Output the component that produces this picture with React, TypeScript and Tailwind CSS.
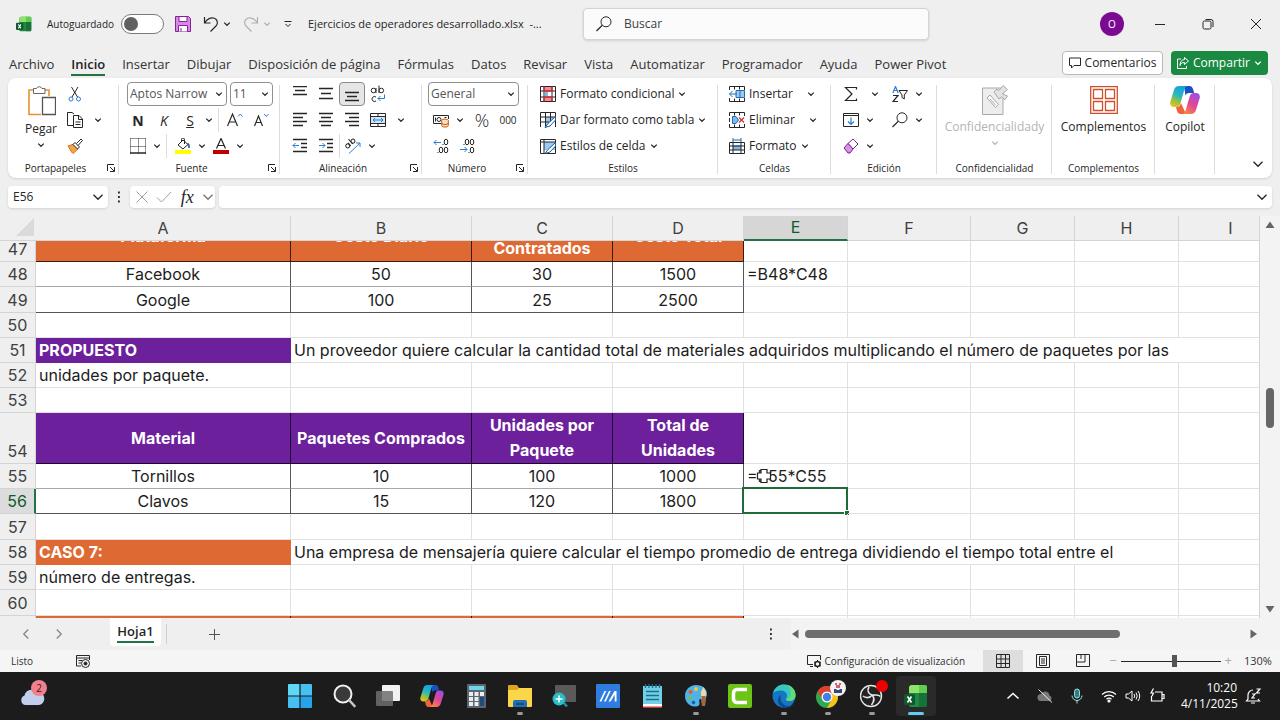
import type { ReactNode } from 'react';
import clsx from 'clsx';

type IconProps = { children: ReactNode; size?: string; box?: string };

const Icon = ({ children, size = 'w-4 h-4', box = '0 0 16 16' }: IconProps) => (
  <svg className={clsx(size, 'shrink-0')} viewBox={box} fill="none" stroke="#262626" strokeWidth="1" aria-hidden="true">
    {children}
  </svg>
);

const Chevron = ({ color = '#262626', big = false }: { color?: string; big?: boolean }) => (
  <svg className={clsx('shrink-0', big ? 'w-3 h-3' : 'w-2 h-2')} viewBox="0 0 8 8" fill="none" stroke={color} strokeWidth={big ? 0.9 : 1.2} aria-hidden="true">
    <path d={big ? 'M1 2.5l3 3 3-3' : 'M1.2 2.6L4 5.3l2.8-2.7'} />
  </svg>
);

/* ---------- Ribbon icons ---------- */

const hLines = (rows: [number, number][], ys: number[]) =>
  rows.map(([a, b], i) => <path key={i} d={`M${a} ${ys[i]}.5H${b}`} strokeWidth="1.3" />);

const AlignTop = () => <Icon>{hLines([[1, 15], [3, 13], [1, 15]], [0, 4, 8])}</Icon>;
const AlignMiddle = () => <Icon>{hLines([[1, 15], [3, 13], [1, 15]], [2, 7, 12])}</Icon>;
const AlignBottom = () => <Icon>{hLines([[1, 15], [3, 13], [1, 15]], [6, 10, 14])}</Icon>;
const AlignLeft = () => <Icon>{hLines([[1, 15], [1, 11], [1, 15], [1, 11]], [1, 5, 9, 13])}</Icon>;
const AlignCenter = () => <Icon>{hLines([[1, 15], [3, 13], [1, 15], [3, 13]], [1, 5, 9, 13])}</Icon>;
const AlignRight = () => <Icon>{hLines([[1, 15], [5, 15], [1, 15], [5, 15]], [1, 5, 9, 13])}</Icon>;

const Indent = ({ right = false }: { right?: boolean }) => (
  <Icon>
    {hLines([[1, 15], [9, 15], [9, 15], [1, 15]], [1, 5, 9, 13])}
    <path stroke="#2b7cd3" d={right ? 'M1 7.5h6M4.500 5l2.500 2.500L4.500 10' : 'M7 7.500H1M3.500 5L1 7.500 3.500 10'} />
  </Icon>
);

const WrapText = () => (
  <Icon size="w-[18px] h-[18px]" box="0 0 18 18">
    <circle cx="4.500" cy="5.500" r="2.300" />
    <path d="M7 3v5M10 0.500V8M7 12a2.500 2.500 0 1 0 0 4" />
    <circle cx="12.300" cy="5.500" r="2.300" />
    <path stroke="#2b7cd3" d="M15.500 9.500v4H9M11.500 11L9 13.500l2.500 2.500" />
  </Icon>
);

const MergeIcon = () => (
  <Icon>
    <path fill="#cfe6fa" stroke="none" d="M1 4h14v8H1z" />
    <path d="M.5 1.500h15v13H.5zM.5 4.500h15M.5 11.500h15M8 1.500v3M8 11.500v3" />
    <path stroke="#2b7cd3" d="M3 8h10M5 6L3 8l2 2M11 6l2 2-2 2" />
  </Icon>
);

const Orientation = () => (
  <Icon size="w-[18px] h-[18px]" box="0 0 18 18">
    <g transform="rotate(-42 7 8)">
      <circle cx="4" cy="6.500" r="2" />
      <path d="M6.200 4.500v4M9 2v6.500" />
      <circle cx="11" cy="6.500" r="2" />
    </g>
    <path stroke="#2b7cd3" d="M5 16.500L16 6M12 6h4v4" />
  </Icon>
);

const PasteIcon = () => (
  <Icon size="w-[29px] h-8" box="0 0 29 32">
    <path stroke="#e8912d" strokeWidth="1.600" d="M14 29.500H2V5h20v6" />
    <path fill="#fff" d="M6.500 8.500v-5H9.500a3 3 0 0 1 5.500 0h3v5z" stroke="#666" />
    <path fill="#fff" d="M15.500 12.500h13v17h-13z" stroke="#555" strokeWidth="1.300" />
  </Icon>
);

const CutIcon = () => (
  <Icon>
    <path d="M4.500 1l6 10M11 1L5 11" />
    <circle cx="4" cy="13" r="2" stroke="#2b7cd3" />
    <circle cx="11.500" cy="13" r="2" stroke="#2b7cd3" />
  </Icon>
);

const CopyIcon = () => (
  <Icon>
    <path d="M6 13.500H.5v-13H5l2 1.500M7.500 4.500V3" />
    <path fill="#fff" d="M6.500 3.500h5.500l3.500 3.500v8.500h-9zM11.500 3.500V7.500h4M8.500 10h5M8.500 12.500h5" />
  </Icon>
);

const BrushIcon = () => (
  <Icon>
    <path fill="#f3a24c" stroke="#d9731a" d="M1 8l6-2 4 5-5 4.500-1.500-1.500z" />
    <path fill="#fff" d="M6 6.500l2-2 4.500 4.500-2 2zM9.500 5.500L14 1l1.500 1.500-4.500 5" />
  </Icon>
);

const BordersIcon = () => (
  <Icon>
    <path strokeDasharray="1 1" d="M.5.5h15M.5.5v15M15.500.5v15M8.500 .5v15M.5 8.500h15" />
    <path strokeWidth="1.300" d="M0 15h16" />
  </Icon>
);

const FillIcon = () => (
  <Icon>
    <path d="M3 7l5-5 5 4.500L8 11z M6.500 3.500V1.500a1.500 1.500 0 0 1 3 0V6" />
    <path stroke="#1f5c99" strokeWidth="1.600" d="M12.500 5.500q2 1 1.500 4.500" />
    <path fill="#ffff00" stroke="none" d="M0 12h16v4H0z" />
  </Icon>
);

const FontColorIcon = () => (
  <Icon>
    <path strokeWidth="1.200" d="M3.500 10.500L8 .5l4.500 10M5 7.500h6" />
    <path fill="#c00000" stroke="none" d="M0 12h16v4H0z" />
  </Icon>
);

const GrowFont = ({ down = false }: { down?: boolean }) => (
  <Icon>
    <path strokeWidth="1.200" d={down ? 'M1.500 14L5.500 4l4 10M3 10.500h5' : 'M.5 14L5.500 2l5 12M2.200 10h6.600'} />
    <path stroke="#2b7cd3" d={down ? 'M11 2l2.300 2.500L15.500 2' : 'M11 4.500L13.300 2l2.200 2.500'} />
  </Icon>
);

const MoneyIcon = () => (
  <Icon>
    <path d="M9 11.500H.5v-8h15V7" />
    <circle cx="6" cy="7.500" r="2" />
    <path d="M2.500 5.500v4M11.500 5.500h2" />
    <g stroke="#c55a11" fill="#fbe0c4">
      <ellipse cx="12" cy="8.500" rx="3.300" ry="1.400" />
      <path d="M8.700 8.500v5c0 2 6.600 2 6.600 0v-5M8.700 11c0 2 6.600 2 6.600 0" />
    </g>
  </Icon>
);

const Decimals = ({ more = false }: { more?: boolean }) => (
  <Icon>
    <ellipse cx="13" cy="4" rx="1.800" ry="2.800" />
    <ellipse cx="13" cy="12" rx="1.800" ry="2.800" />
    {more ? <ellipse cx="8" cy="4" rx="1.800" ry="2.800" /> : <ellipse cx="8" cy="12" rx="1.800" ry="2.800" />}
    <path d={more ? 'M4.500 6.500h1M9.500 14.500h1' : 'M9.500 6.500h1M4.500 14.500h1'} />
    <path stroke="#2b7cd3" d={more ? 'M1 11.500h7M5.500 9L8 11.500 5.500 14' : 'M8 4.500H1M3.500 2L1 4.500 3.500 7'} />
  </Icon>
);

const CondFormat = () => (
  <Icon>
    <path fill="#f28b95" stroke="none" d="M4 1h8v4H4zM4 11h8v4H4z" />
    <path fill="#7db8ee" stroke="none" d="M5 5.500h3v5H5z" />
    <path d="M.5.5h15v15H.5zM.5 5h15M.5 11h15M4 .5v15M12 .5v15" />
    <path stroke="#d13438" strokeWidth="1.300" d="M4 .5v4.500h8V.5M4 15.500V11h8v4.500" />
  </Icon>
);

const TableStyle = ({ cell = false }: { cell?: boolean }) => (
  <Icon>
    <path fill="#9ccaf2" stroke="none" d={cell ? 'M4 4h11v8H4z' : 'M5.500 5h5v5h-5zM10 5h5v5h-5zM5.500 10h5v5h-5z'} />
    <path d={cell ? 'M.5 15.500V1.500h15v14zM.5 4h15M4 1.500v14' : 'M.5 15V.5h15V15M.5 5h15M.5 10h9M5.500.5v15M10.500.5v9'} />
    <path fill="#fff" stroke="#1f5c99" d="M15.500 4.500l-7.500 7-3 4 5-1.500 5.500-6z" />
  </Icon>
);

const InsertCells = () => (
  <Icon>
    <path d="M.5 4V.5h15V4M.5 12v3.500h15V12M5.500.5v3M10.500.5v3M5.500 12.500v3M10.500 12.500v3" />
    <path fill="#9ccaf2" stroke="#1f6fb5" d="M7 4.500h8.500v7H7zM11 4.500v7" />
    <path stroke="#1f6fb5" d="M8 8H.5M3.500 5L.5 8l3 3" />
  </Icon>
);

const DeleteCells = () => (
  <Icon>
    <path d="M.5 4V.5h15V4M.5 12v3.500h15V12M5.500.5v3M10.500.5v3M5.500 12.500v3M10.500 12.500v3M.5 6v4" />
    <path fill="#7db8ee" stroke="#1f6fb5" d="M3.500 4.500h3.500L9.500 8 7 11.500H3.500z" />
    <path stroke="#d13438" strokeWidth="1.300" d="M10 5.500l5 5M15 5.500l-5 5" />
  </Icon>
);

const FormatCells = () => (
  <Icon>
    <path fill="#7db8ee" stroke="none" d="M4 7h8v5H4z" />
    <path d="M.5 4.500h15v11H.5zM.5 8h15M.5 12h15M4 4.500v11M12 4.500v11" />
    <path stroke="#1f6fb5" d="M4 0v4M12 0v4M4 2h8" />
  </Icon>
);

const SigmaIcon = () => (
  <Icon><path strokeWidth="1.200" d="M13.500 3.500V1.500H2.500L9 8l-6.500 6.500h11v-2" /></Icon>
);

const FillDown = () => (
  <Icon>
    <path d="M.5 1.500h15v13H.5zM.5 3.500h15" />
    <path stroke="#2b7cd3" strokeWidth="1.200" d="M8 5.500v7M5 9.500l3 3 3-3" />
  </Icon>
);

const Eraser = () => (
  <Icon>
    <path fill="#fff" stroke="#7a1f8f" d="M5 5.500L10 1l5 5-5 5z" />
    <path fill="#d993e3" stroke="#7a1f8f" d="M1 10l4-4.500 5 5.500-3 4H5z" />
  </Icon>
);

const SortFilter = () => (
  <Icon>
    <path stroke="#2b7cd3" strokeWidth="1.200" d="M.8 7L3.500.5 6.200 7M1.800 4.500h3.500" />
    <path strokeWidth="1.200" d="M1 9.500h5L1 15.500h5" />
    <path d="M7 4.500h8.500l-3.200 4.500v4L10 11.500V9z" />
  </Icon>
);

const FindIcon = () => (
  <Icon>
    <circle cx="10" cy="5.800" r="5" />
    <path d="M6.300 9.300L.5 15" strokeWidth="1.200" />
  </Icon>
);

const Sensitivity = () => (
  <Icon size="w-7 h-[30px]" box="0 0 28 30">
    <g stroke="#a8a8a8" fill="#ededed">
      <path d="M1.500 3H22v26.500H1.500z" />
      <path fill="#fafafa" d="M6 13l3-3 8.500 9.500-3 3z" />
      <path d="M9 14l5.500 6" />
      <path fill="#e3e3e3" d="M13 7l3-3 2 1.500 4-5 4.500 4-5 4.500 5 2-2.500 3.500-3.500-2.500-2.500 2z" />
    </g>
  </Icon>
);

const AddIns = () => (
  <Icon size="w-7 h-7" box="0 0 28 28">
    <g stroke="#d1502b" strokeWidth="1.300">
      <path d="M.7.700h26.600v26.600H.7zM3.500 3.500h9v9h-9zM15.500 3.500h9v9h-9zM3.500 15.500h9v9h-9zM15.500 15.500h9v9h-9z" />
    </g>
  </Icon>
);

const CopilotLogo = ({ size = 'w-[30px] h-7', id }: { size?: string; id: string }) => (
  <svg className={clsx(size, 'shrink-0')} viewBox="0 0 30 28" aria-hidden="true">
    <defs>
      <linearGradient id={`${id}a`} x1="0.600" y1="0" x2="0.200" y2="1">
        <stop offset="0" stopColor="#1aa0e0" />
        <stop offset=".4" stopColor="#25b5c4" />
        <stop offset=".7" stopColor="#8bc34a" />
        <stop offset="1" stopColor="#f4c20d" />
      </linearGradient>
      <linearGradient id={`${id}b`} x1="0.800" y1="0" x2="0.200" y2="1">
        <stop offset="0" stopColor="#9b4fe0" />
        <stop offset=".5" stopColor="#e0459b" />
        <stop offset="1" stopColor="#f98a3c" />
      </linearGradient>
    </defs>
    <path fill="#1b4fc4" d="M14 0h5.500c2 0 3 1.500 3.500 3l1.200 4H19c-2 0-3 1-3.500 2.500z" />
    <path fill={`url(#${id}a)`} d="M9 0h9c-2 0-3 1.500-3.600 3.500L10.500 17c-.7 2.500-2 4-4.500 4H4c-3 0-4.500-2.500-3.600-5.500L4 4C4.800 1.500 6.500 0 9 0z" />
    <path fill="#f0643c" d="M16 28h-5.500c-2 0-3-1.500-3.500-3l-1-4c3 0 4-1 5-4z" />
    <path fill={`url(#${id}b)`} d="M21 28h-9c2 0 3-1.500 3.600-3.500L19.500 11c.7-2.500 2-4 4.500-4h2c3 0 4.500 2.500 3.600 5.500L26 24c-.8 2.500-2.500 4-5 4z" />
  </svg>
);

const ExcelLogo = ({ size }: { size: string }) => (
  <svg className={clsx(size, 'shrink-0')} viewBox="0 0 24 24" aria-hidden="true">
    <path fill="#1d8a45" d="M5 4a3 3 0 0 1 3-3h13a2 2 0 0 1 2 2v18a2 2 0 0 1-2 2H7a2 2 0 0 1-2-2z" />
    <path fill="#8fe36b" d="M5 4a3 3 0 0 1 3-3h7v8H5z" />
    <path fill="#5fce4f" d="M15 1h6a2 2 0 0 1 2 2v6h-8z" />
    <path fill="#145c2e" d="M15 9h8v12a2 2 0 0 1-2 2h-6z" opacity=".55" />
    <rect x="0" y="10" width="11" height="11" rx="1.500" fill="#0f5a2c" />
    <path d="M3.500 12.500l4 6M7.500 12.500l-4 6" stroke="#fff" strokeWidth="1.600" />
  </svg>
);

/* ---------- Ribbon building blocks ---------- */

const Tool = ({ label, children, active = false }: { label: string; children: ReactNode; active?: boolean }) => (
  <button
    type="button"
    aria-label={label}
    className={clsx(
      'flex h-6 w-[26px] shrink-0 items-center justify-center rounded',
      active && 'border border-[#8a8a8a] bg-[#e6e6e6]'
    )}
  >
    {children}
  </button>
);

const More = ({ label }: { label: string }) => (
  <button type="button" aria-label={label} className="flex h-6 w-3 shrink-0 items-center justify-center">
    <Chevron />
  </button>
);

const Sep = () => <span className="mx-[3px] h-6 w-px shrink-0 bg-[#dcdcdc]" />;

const Row = ({ children }: { children: ReactNode }) => <div className="flex h-[26px] items-center">{children}</div>;

type GroupProps = { title?: string; width: string; launcher?: boolean; children: ReactNode };

const Group = ({ title, width, launcher, children }: GroupProps) => (
  <section className={clsx('relative flex shrink-0 flex-col', width)}>
    <div className="h-[78px]">{children}</div>
    {title && (
      <div className={clsx('text-center text-[10px] leading-[18px] text-[#262626]', launcher && 'pr-4')}>{title}</div>
    )}
    {launcher && (
      <button type="button" aria-label={`Opciones de ${title}`} className="absolute right-1 bottom-1.5">
        <Icon size="w-2 h-2" box="0 0 8 8">
          <path d="M.5 7V.5H7M3 3l4 4M7.500 3v4.500H3" />
        </Icon>
      </button>
    )}
    <span className="absolute top-1 right-0 bottom-1 w-px bg-[#dcdcdc]" />
  </section>
);

const RibbonSelect = ({ label, value, width }: { label: string; value: string; width: string }) => (
  <div className={clsx('relative', width)}>
    <select
      aria-label={label}
      defaultValue={value}
      className="h-6 w-full appearance-none rounded border border-[#8f8f8f] bg-white pl-0.5 text-[12px] text-[#555]"
    >
      <option>{value}</option>
    </select>
    <span className="pointer-events-none absolute top-2 right-1 flex">
      <Chevron />
    </span>
  </div>
);

const TextTool = ({ icon, children }: { icon: ReactNode; children: ReactNode }) => (
  <button type="button" className="flex h-[26px] items-center gap-1 whitespace-nowrap">
    {icon}
    <span>{children}</span>
    <Chevron />
  </button>
);

const Ribbon = () => (
  <div className="mx-2 flex h-[100px] shrink-0 overflow-hidden rounded-lg bg-white pt-[3px] text-[12px] text-[#262626] shadow-sm">
    <Group title="Portapapeles" width="w-[111px]" launcher>
      <div className="flex h-full pl-4">
        <button type="button" className="flex w-[34px] flex-col items-center pt-1">
          <PasteIcon />
          <span className="leading-6">Pegar</span>
          <Chevron />
        </button>
        <div className="pl-1">
          <Row><Tool label="Cortar"><CutIcon /></Tool></Row>
          <Row><Tool label="Copiar"><CopyIcon /></Tool><span className="w-1" /><More label="Opciones de copia" /></Row>
          <Row><Tool label="Copiar formato"><BrushIcon /></Tool></Row>
        </div>
      </div>
    </Group>

    <Group title="Fuente" width="w-[161px]" launcher>
      <div className="pl-[6px]">
        <div className="flex h-[26px] items-center gap-[3px] pl-0.5">
          <RibbonSelect label="Fuente" value="Aptos Narrow" width="w-[100px]" />
          <RibbonSelect label="Tamaño de fuente" value="11" width="w-[43px]" />
        </div>
        <Row>
          <Tool label="Negrita"><b className="text-[14px]">N</b></Tool>
          <Tool label="Cursiva"><i className="text-[14px]">K</i></Tool>
          <Tool label="Subrayado"><u className="text-[14px]">S</u></Tool>
          <More label="Opciones de subrayado" />
          <Sep />
          <Tool label="Aumentar tamaño"><GrowFont /></Tool>
          <Tool label="Disminuir tamaño"><GrowFont down /></Tool>
        </Row>
        <Row>
          <Tool label="Bordes"><BordersIcon /></Tool>
          <More label="Opciones de bordes" />
          <Sep />
          <Tool label="Color de relleno"><FillIcon /></Tool>
          <More label="Opciones de relleno" />
          <Tool label="Color de fuente"><FontColorIcon /></Tool>
          <More label="Opciones de color" />
        </Row>
      </div>
    </Group>

    <Group title="Alineación" width="w-[142px]" launcher>
      <div className="pl-[7px]">
        <Row>
          <Tool label="Alinear arriba"><AlignTop /></Tool>
          <Tool label="Alinear en medio"><AlignMiddle /></Tool>
          <Tool label="Alinear abajo" active><AlignBottom /></Tool>
          <Tool label="Ajustar texto"><WrapText /></Tool>
        </Row>
        <Row>
          <Tool label="Izquierda"><AlignLeft /></Tool>
          <Tool label="Centrar"><AlignCenter /></Tool>
          <Tool label="Derecha"><AlignRight /></Tool>
          <Tool label="Combinar y centrar"><MergeIcon /></Tool>
          <span className="w-1" />
          <More label="Opciones de combinar" />
        </Row>
        <Row>
          <Tool label="Disminuir sangría"><Indent /></Tool>
          <Tool label="Aumentar sangría"><Indent right /></Tool>
          <span className="h-6 w-px bg-[#dcdcdc]" />
          <Tool label="Orientación"><Orientation /></Tool>
          <More label="Opciones de orientación" />
        </Row>
      </div>
    </Group>

    <Group title="Número" width="w-[106px]" launcher>
      <div className="pl-[6px]">
        <div className="flex h-[26px] items-center">
          <RibbonSelect label="Formato de número" value="General" width="w-[91px]" />
        </div>
        <Row>
          <Tool label="Formato de contabilidad"><MoneyIcon /></Tool>
          <More label="Opciones de contabilidad" />
          <span className="w-[3px]" />
          <Tool label="Porcentaje"><span className="text-[18px] font-light">%</span></Tool>
          <Tool label="Millares"><span className="text-[10px]">000</span></Tool>
        </Row>
        <Row>
          <Tool label="Aumentar decimales"><Decimals /></Tool>
          <Tool label="Disminuir decimales"><Decimals more /></Tool>
        </Row>
      </div>
    </Group>

    <Group title="Estilos" width="w-[190px]">
      <div className="pl-3">
        <TextTool icon={<CondFormat />}>Formato condicional</TextTool>
        <TextTool icon={<TableStyle />}>Dar formato como tabla</TextTool>
        <TextTool icon={<TableStyle cell />}>Estilos de celda</TextTool>
      </div>
    </Group>

    <Group title="Celdas" width="w-[113px]">
      <div className="pl-[11px]">
        <div className="flex items-center gap-3"><button type="button" className="flex h-[26px] items-center gap-1"><InsertCells />Insertar</button><More label="Opciones de insertar" /></div>
        <div className="flex items-center gap-3"><button type="button" className="flex h-[26px] items-center gap-1"><DeleteCells />Eliminar</button><More label="Opciones de eliminar" /></div>
        <TextTool icon={<FormatCells />}>Formato</TextTool>
      </div>
    </Group>

    <Group title="Edición" width="w-[106px]">
      <div className="pl-[7px]">
        <Row>
          <Tool label="Autosuma"><SigmaIcon /></Tool><span className="w-[5px]" /><More label="Opciones de autosuma" />
          <span className="w-[6px]" />
          <Tool label="Ordenar y filtrar"><SortFilter /></Tool><More label="Opciones de filtro" />
        </Row>
        <Row>
          <Tool label="Rellenar"><FillDown /></Tool><More label="Opciones de rellenar" />
          <span className="w-[11px]" />
          <Tool label="Buscar y seleccionar"><FindIcon /></Tool><More label="Opciones de buscar" />
        </Row>
        <Row>
          <Tool label="Borrar"><Eraser /></Tool><More label="Opciones de borrar" />
        </Row>
      </div>
    </Group>

    <Group title="Confidencialidad" width="w-[115px]">
      <button type="button" disabled className="flex w-full flex-col items-center pt-1 text-[#b4b4b4]">
        <Sensitivity />
        <span className="leading-6">Confidencialidady</span>
        <Chevron color="#b4b4b4" />
      </button>
    </Group>

    <Group title="Complementos" width="w-[103px]">
      <button type="button" className="flex w-full flex-col items-center gap-px pt-[5px]">
        <AddIns />
        <span className="leading-6">Complementos</span>
      </button>
    </Group>

    <Group width="w-[60px]">
      <button type="button" className="flex w-full flex-col items-center gap-px pt-[5px]">
        <CopilotLogo id="ribbon" />
        <span className="leading-6">Copilot</span>
      </button>
    </Group>

    <button type="button" aria-label="Contraer la cinta" className="mt-auto mr-2 mb-2 ml-auto">
      <Chevron big />
    </button>
  </div>
);

/* ---------- Window chrome ---------- */

const TitleBar = () => (
  <header className="flex h-12 shrink-0 items-center pr-[18px] pl-4 text-[12px] text-[#262626]">
    <ExcelLogo size="w-4 h-4" />
    <label htmlFor="autosave" className="ml-[15px] w-[74px] text-[10px]">Autoguardado</label>
    <span className="relative flex h-5 w-[43px] items-center">
      <input id="autosave" type="checkbox" role="switch" className="h-5 w-full appearance-none rounded-full border border-[#7a7a7a] bg-white" />
      <span className="pointer-events-none absolute left-[3px] h-3.5 w-3.5 rounded-full bg-[#616161]" />
    </span>
    <button type="button" aria-label="Guardar" className="ml-[11px]">
      <Icon>
        <path fill="#d58be0" stroke="#8a1f9e" d="M.5.5h13l2 2v13H.5z" />
        <path fill="#fff" stroke="#8a1f9e" d="M4 .5h8v5H4zM3.500 15.500v-6h9v6M6 15.500v-3.500" />
      </Icon>
    </button>
    <button type="button" aria-label="Deshacer" className="ml-3 flex items-center gap-1">
      <Icon><path strokeWidth="1.200" d="M1.500 1v6h6M1.800 6.700C4 3.500 7 1.500 10.500 2c4 .6 5 5.500 2.500 8L7.500 15.500" /></Icon>
      <Chevron />
    </button>
    <button type="button" aria-label="Rehacer" disabled className="ml-3 flex items-center gap-1">
      <Icon><path stroke="#b0b0b0" strokeWidth="1.200" d="M14.500 1v6h-6M14.200 6.700C12 3.500 9 1.500 5.500 2c-4 .6-5 5.500-2.500 8l5.500 5.500" /></Icon>
      <Chevron color="#b0b0b0" />
    </button>
    <button type="button" aria-label="Personalizar" className="ml-[13px]">
      <Icon size="w-2 h-2" box="0 0 8 8"><path d="M.5 1.500h7M1.500 4L4 6.500 6.500 4" /></Icon>
    </button>
    <h1 className="ml-4 w-[254px] text-[11px] whitespace-pre">Ejercicios de operadores desarrollado.xlsx  -...</h1>
    <label className="ml-[21px] flex h-8 w-[346px] items-center gap-3 rounded border border-[#d4d4d4] bg-[#fbfbfb] px-3 shadow-sm">
      <FindIcon />
      <input aria-label="Buscar" placeholder="Buscar" className="w-full bg-transparent text-[12px] outline-none placeholder:text-[#404040]" />
    </label>
    <div className="ml-auto flex items-center gap-[30px]">
      <span className="flex h-6 w-6 items-center justify-center rounded-full bg-[#7b0a92] text-[10px] text-white">O</span>
      <div className="flex items-center gap-9">
        <button type="button" aria-label="Minimizar"><Icon size="w-3 h-3" box="0 0 12 12"><path d="M1 6.500h10" /></Icon></button>
        <button type="button" aria-label="Restaurar">
          <Icon size="w-3 h-3" box="0 0 12 12">
            <rect x="1" y="3" width="8" height="8" rx="1.500" />
            <path d="M3.500 1.500H9a2 2 0 0 1 2 2V9" />
          </Icon>
        </button>
        <button type="button" aria-label="Cerrar"><Icon size="w-3 h-3" box="0 0 12 12"><path d="M1 1l10 10M11 1L1 11" /></Icon></button>
      </div>
    </div>
  </header>
);

const menu = [
  'Archivo', 'Inicio', 'Insertar', 'Dibujar', 'Disposición de página', 'Fórmulas', 'Datos',
  'Revisar', 'Vista', 'Automatizar', 'Programador', 'Ayuda', 'Power Pivot',
];

const MenuBar = () => (
  <nav className="flex h-[30px] shrink-0 items-center gap-[17px] pr-3 pl-[9px] text-[13px] text-[#333]">
    {menu.map((name) => (
      <a
        key={name}
        href="#"
        className={clsx(
          'border-b-2 pt-1 leading-5 whitespace-nowrap',
          name === 'Inicio' ? 'border-[#217346] font-semibold text-[#1f1f1f]' : 'border-transparent'
        )}
      >
        {name}
      </a>
    ))}
    <div className="ml-auto flex gap-2">
      <button type="button" className="flex h-6 w-[101px] items-center justify-center gap-1 rounded border border-[#b8b8b8] bg-white text-[12px] text-[#262626]">
        <Icon size="w-3 h-3" box="0 0 12 12"><path d="M.5 1h11v7.500H5L2.500 11V8.500h-2z" /></Icon>
        Comentarios
      </button>
      <button type="button" className="flex h-6 w-[97px] items-center justify-center gap-1 rounded bg-[#1a8a43] text-[12px] text-white">
        <Icon size="w-3 h-3" box="0 0 12 12"><path stroke="#fff" d="M4 2H.5v9.500h9V9M7.500.5L11.500 4l-4 3.500V5.500C5 5.500 3.500 6.500 3 8.500 3 5 4.500 2.800 7.500 2.500z" /></Icon>
        Compartir
        <Chevron color="#fff" />
      </button>
    </div>
  </nav>
);

const FormulaBar = () => (
  <div className="flex h-[38px] shrink-0 items-center px-2 text-[12px] text-[#262626]">
    <label className="flex h-[22px] w-[100px] items-center justify-between rounded bg-white pr-1 pl-[5px] shadow-sm">
      <input aria-label="Cuadro de nombres" defaultValue="E56" className="w-16 outline-none" />
      <Chevron big />
    </label>
    <Icon size="w-4 h-4 mx-[3px]"><path strokeWidth="1.800" d="M7 3.500h1.800M7 8h1.800M7 12.500h1.800" /></Icon>
    <div className="flex h-[22px] w-[85px] items-center justify-between rounded bg-white pr-px pl-[6px] shadow-sm">
      <button type="button" aria-label="Cancelar"><Icon size="w-3 h-3" box="0 0 12 12"><path stroke="#a0a0a0" d="M.5.5l11 11M11.500.5l-11 11" /></Icon></button>
      <button type="button" aria-label="Introducir"><Icon size="w-4 h-3" box="0 0 16 12"><path stroke="#a0a0a0" d="M1 6.500L5.500 11 15 1" /></Icon></button>
      <button type="button" aria-label="Insertar función" className="font-['Liberation_Serif',serif] text-[18px] leading-5 italic">fx</button>
      <Chevron big color="#777" />
    </div>
    <label className="ml-1 flex h-[22px] flex-1 items-center rounded bg-white pr-1 shadow-sm">
      <input aria-label="Barra de fórmulas" className="w-full outline-none" />
      <Chevron big />
    </label>
  </div>
);

/* ---------- Sheet ---------- */

const columns = [
  { name: 'A', width: 'w-[255px]' },
  { name: 'B', width: 'w-[181px]' },
  { name: 'C', width: 'w-[141px]' },
  { name: 'D', width: 'w-[131px]' },
  { name: 'E', width: 'w-[104px]' },
  { name: 'F', width: 'w-[123px]' },
  { name: 'G', width: 'w-[104px]' },
  { name: 'H', width: 'w-[104px]' },
  { name: 'I', width: 'w-[104px]' },
];

type Kind = 'orange' | 'purple' | 'data' | 'plain' | 'caseOrange' | 'casePurple';
type SheetRow = { n?: number; height: string; kind: Kind; cells?: string[]; formula?: string; note?: string; span?: number };

const rows: SheetRow[] = [
  { n: 47, height: 'h-[51px]', kind: 'orange', cells: ['Plataforma', 'Costo Diario', '\nContratados', 'Costo Total'] },
  { n: 48, height: 'h-[25px]', kind: 'data', cells: ['Facebook', '50', '30', '1500'], formula: '=B48*C48' },
  { n: 49, height: 'h-[26px]', kind: 'data', cells: ['Google', '100', '25', '2500'] },
  { n: 50, height: 'h-[25px]', kind: 'plain' },
  {
    n: 51, height: 'h-[25px]', kind: 'casePurple', cells: ['PROPUESTO'], span: 8,
    note: 'Un proveedor quiere calcular la cantidad total de materiales adquiridos multiplicando el número de paquetes por las',
  },
  { n: 52, height: 'h-[25px]', kind: 'plain', cells: ['unidades por paquete.'] },
  { n: 53, height: 'h-[25px]', kind: 'plain' },
  { n: 54, height: 'h-[51px]', kind: 'purple', cells: ['Material', 'Paquetes Comprados', 'Unidades por\nPaquete', 'Total de\nUnidades'] },
  { n: 55, height: 'h-[25px]', kind: 'data', cells: ['Tornillos', '10', '100', '1000'], formula: '=B55*C55' },
  { n: 56, height: 'h-[25px]', kind: 'data', cells: ['Clavos', '15', '120', '1800'] },
  { n: 57, height: 'h-[26px]', kind: 'plain' },
  {
    n: 58, height: 'h-[25px]', kind: 'caseOrange', cells: ['CASO 7:'], span: 7,
    note: 'Una empresa de mensajería quiere calcular el tiempo promedio de entrega dividiendo el tiempo total entre el',
  },
  { n: 59, height: 'h-[25px]', kind: 'plain', cells: ['número de entregas.'] },
  { n: 60, height: 'h-[26px]', kind: 'plain' },
  { height: 'h-[51px]', kind: 'orange', cells: ['', '', '', ''] },
];

const cellStyle: Record<Kind, string> = {
  orange: 'border-[#3a1a08] bg-[#df6932] px-1 text-center leading-[25px] font-bold whitespace-pre-line text-white',
  purple: 'border-[#1d0730] bg-[#6c209c] px-1 text-center leading-[25px] font-bold whitespace-pre-line text-white',
  data: 'border-[#555] text-center leading-6',
  plain: 'border-[#e1e1e1] pl-[3px] leading-6 whitespace-nowrap',
  caseOrange: 'border-[#df6932] bg-[#df6932] pl-[3px] leading-6 font-bold text-white',
  casePurple: 'border-[#6c209c] bg-[#6c209c] pl-[3px] leading-6 font-bold text-white',
};

const SheetCols = () => (
  <colgroup>
    <col className="w-9" />
    {columns.map((c) => <col key={c.name} className={c.width} />)}
  </colgroup>
);

const SheetRowView = ({ row }: { row: SheetRow }) => {
  const used = row.cells?.length ?? 0;
  const restStart = used + (row.span ?? 0);
  return (
    <tr className={row.height}>
      <th
        scope="row"
        className={clsx(
          'border-r border-b border-[#d4d4d4] p-0 align-bottom leading-6 font-normal',
          row.n === 56 ? 'border-r-2 border-r-[#217346] bg-[#dcdcdc] text-[#0f5a2c]' : 'bg-[#efefef] text-[#404040]'
        )}
      >
        {row.n}
      </th>
      {row.cells?.map((text, i) => (
        <td key={i} className={clsx('border-r border-b py-0', cellStyle[row.kind], row.formula && 'border-b-[#a8a8a8]')}>
          {text}
        </td>
      ))}
      {row.note && (
        <td colSpan={row.span} className="border-r border-b border-[#e1e1e1] p-0 pl-[3px] leading-6 whitespace-nowrap">{row.note}</td>
      )}
      {columns.slice(restStart).map((c) => (
        <td key={c.name} className="relative border-r border-b border-[#e1e1e1] p-0 pl-[3px] leading-6 whitespace-nowrap">
          {c.name === 'E' && row.formula}
          {c.name === 'E' && row.n === 55 && (
            <svg className="absolute top-1 left-3 h-4 w-4" viewBox="0 0 16 16" fill="#fff" stroke="#222" strokeWidth="1.200" aria-hidden="true">
              <path d="M5 1.500h6V5h3.500v6H11v3.500H5V11H1.500V5H5z" />
            </svg>
          )}
          {c.name === 'E' && row.n === 56 && (
            <span className="absolute -top-0.5 -right-px -bottom-px -left-0.5 border-2 border-[#1f6b3a]">
              <span className="absolute -right-[3px] -bottom-[3px] h-[5px] w-[5px] border-t border-l border-white bg-[#1f6b3a]" />
            </span>
          )}
        </td>
      ))}
    </tr>
  );
};

const Sheet = () => (
  <main className="flex min-h-0 flex-1 bg-[#efefef]">
    <div className="flex min-w-0 flex-1 flex-col overflow-hidden border-r border-[#d4d4d4] bg-white font-['Inter',sans-serif] text-[16px] text-[#1c1c1c]">
      <table className="w-[1283px] shrink-0 table-fixed border-separate border-spacing-0">
        <SheetCols />
        <thead>
          <tr className="h-[25px]">
            <th className="relative border-b border-[#d4d4d4] bg-[#efefef] p-0">
              <svg className="absolute right-0.5 bottom-1 h-[18px] w-[18px]" viewBox="0 0 18 18" aria-hidden="true"><path fill="#dadada" d="M18 0v18H0z" /></svg>
            </th>
            {columns.map((c) => (
              <th
                key={c.name}
                scope="col"
                className={clsx(
                  'border-r p-0 leading-[23px] font-normal',
                  c.name === 'E' ? 'border-b-2 border-r-[#d4d4d4] border-b-[#217346] bg-[#d6d6d6] text-[#0f5a2c]' : 'border-b border-[#d4d4d4] bg-[#efefef] text-[#404040]'
                )}
              >
                {c.name}
              </th>
            ))}
          </tr>
        </thead>
      </table>
      <div className="min-h-0 flex-1 overflow-hidden">
        <table className="-mt-[30px] w-[1283px] table-fixed border-separate border-spacing-0">
          <SheetCols />
          <tbody>
            {rows.map((row, i) => <SheetRowView key={i} row={row} />)}
          </tbody>
        </table>
      </div>
    </div>
    <div className="flex w-5 flex-col items-center bg-[#f3f3f3] py-1">
      <button type="button" aria-label="Subir"><Icon size="w-2.5 h-2.5" box="0 0 10 10"><path fill="#666" stroke="none" d="M5 1.500L9.500 8h-9z" /></Icon></button>
      <span className="mt-[158px] h-10 w-2 rounded-full bg-[#666]" />
      <button type="button" aria-label="Bajar" className="mt-auto"><Icon size="w-2.5 h-2.5" box="0 0 10 10"><path fill="#666" stroke="none" d="M5 8.500L9.500 2h-9z" /></Icon></button>
    </div>
  </main>
);

const SheetTabs = () => (
  <div className="flex h-8 shrink-0 items-center bg-[#efefef]">
    <button type="button" aria-label="Hoja anterior" className="ml-5 flex h-3 w-3 rotate-90"><Chevron big color="#888" /></button>
    <button type="button" aria-label="Hoja siguiente" className="ml-[21px] flex h-3 w-3 -rotate-90"><Chevron big color="#888" /></button>
    <button type="button" className="mb-1 ml-[45px] flex h-7 w-[51px] items-center justify-center rounded-b bg-white text-[13px] font-semibold text-[#262626]">
      <span className="border-b-2 border-[#217346] leading-5">Hoja1</span>
    </button>
    <span className="ml-[5px] h-5 w-px bg-[#d0d0d0]" />
    <button type="button" aria-label="Hoja nueva" className="ml-[39px]"><Icon><path stroke="#555" d="M8.500 3v11M3 8.500h11" /></Icon></button>
    <div className="ml-auto flex h-full w-[517px] items-center">
      <Icon><path strokeWidth="1.800" d="M7 3.500h1.800M7 8h1.800M7 12.500h1.800" /></Icon>
      <div className="ml-3 flex h-full flex-1 items-center bg-[#f3f3f3] pr-[22px]">
        <Icon size="w-2.5 h-2.5" box="0 0 10 10"><path fill="#666" stroke="none" d="M1 5l6.500-4.500v9z" /></Icon>
        <span className="ml-1 h-2 w-[315px] rounded-full bg-[#6e6e6e]" />
        <span className="ml-auto"><Icon size="w-2.5 h-2.5" box="0 0 10 10"><path fill="#666" stroke="none" d="M9 5L2.500.5v9z" /></Icon></span>
      </div>
    </div>
  </div>
);

const StatusBar = () => (
  <footer className="flex h-[22px] shrink-0 items-center bg-[#f5f5f5] pr-2 pl-[11px] text-[10px] text-[#333]">
    <span className="w-16">Listo</span>
    <Icon>
      <path d="M6 13H1.500V2.500h13V7M1.500 5h13M3.500 7.500H7M3.500 10H6" />
      <circle cx="10.500" cy="10.500" r="4" />
      <circle cx="10.500" cy="10.500" r="1.500" fill="#262626" />
    </Icon>
    <button type="button" className="ml-auto flex items-center gap-[3px]">
      <Icon size="w-3.5 h-3.5" box="0 0 14 14">
        <path d="M6 10.500H.5v-9h13V6M3 12.500h3" />
        <circle cx="10.500" cy="10" r="2.500" strokeWidth="1.600" />
        <path d="M10.500 6v1.500M10.500 12.500V14M7 8l1 .6M13 11.500l1 .5M14 8l-1 .6M8 11.500L7 12" />
      </Icon>
      Configuración de visualización
    </button>
    <button type="button" aria-label="Normal" className="ml-[18px] flex h-full w-10 items-center justify-center bg-[#dedede]">
      <Icon size="w-3.5 h-3.5" box="0 0 14 14"><path d="M.5.5h13v13H.5zM.5 5h13M.5 9.500h13M5 .5v13M9.500.5v13" /></Icon>
    </button>
    <button type="button" aria-label="Diseño de página" className="flex w-10 justify-center">
      <Icon size="w-3.5 h-3.5" box="0 0 14 14"><path d="M.5.5h13v13H.5zM3.500 2.500h7v9h-7zM5 5h4M5 7h4M5 9h4" /></Icon>
    </button>
    <button type="button" aria-label="Vista previa de salto de página" className="flex w-10 justify-center">
      <Icon size="w-3.5 h-3.5" box="0 0 14 14"><path d="M.5.5h13v12H.5zM.5 8h8.500V.5M5 .5V5" /></Icon>
    </button>
    <div className="ml-1.5 flex items-center gap-1">
      <span className="text-[13px] text-[#aaa]">−</span>
      <label className="relative flex h-4 w-[100px] items-center">
        <input
          type="range"
          aria-label="Zoom"
          min={10}
          max={230}
          defaultValue={130}
          className="h-px w-full appearance-none bg-[#262626] [&::-webkit-slider-thumb]:h-3 [&::-webkit-slider-thumb]:w-[5px] [&::-webkit-slider-thumb]:appearance-none [&::-webkit-slider-thumb]:bg-[#555]"
        />
      </label>
      <span className="text-[13px] text-[#aaa]">+</span>
    </div>
    <span className="ml-3 w-7 text-[11px]">130%</span>
  </footer>
);

/* ---------- Taskbar ---------- */

type TaskApp = { name: string; icon: ReactNode; running?: boolean; active?: boolean };

const TaskIcon = ({ children }: { children: ReactNode }) => (
  <svg className="h-6 w-6" viewBox="0 0 24 24" fill="none" aria-hidden="true">{children}</svg>
);

const apps: TaskApp[] = [
  {
    name: 'Inicio',
    icon: (
      <TaskIcon>
        <path fill="#5fd8f5" d="M0 1a1 1 0 0 1 1-1h10.400v11.400H0z" />
        <path fill="#45c0f0" d="M12.600 0H23a1 1 0 0 1 1 1v10.400H12.600zM0 12.600h11.400V24H1a1 1 0 0 1-1-1z" />
        <path fill="#26a3ea" d="M12.600 12.600H24V23a1 1 0 0 1-1 1H12.600z" />
      </TaskIcon>
    ),
  },
  {
    name: 'Búsqueda',
    icon: (
      <TaskIcon>
        <circle cx="11" cy="10" r="8.500" fill="#3a3a3a" stroke="#f0f0f0" strokeWidth="2" />
        <path d="M17.500 16.500l5 5.500" stroke="#c8c8c8" strokeWidth="2.600" strokeLinecap="round" />
      </TaskIcon>
    ),
  },
  {
    name: 'Vista de tareas',
    icon: (
      <TaskIcon>
        <rect x="6" y="1" width="18" height="16" rx="1" fill="#f2f2f2" />
        <rect x="0" y="7" width="17" height="15" rx="1" fill="#6f6f6f" opacity=".85" />
      </TaskIcon>
    ),
  },
  { name: 'Copilot', icon: <CopilotLogo id="task" size="w-6 h-[22px]" /> },
  {
    name: 'Calculadora',
    icon: (
      <TaskIcon>
        <rect x="3" y="0" width="19" height="24" rx="1" fill="#5c6670" />
        <path fill="#6fd6e8" d="M5 2h15v4H5z" />
        <path fill="#e8edf0" d="M5 8h4v4H5zM10.500 8h4v4h-4zM16 8h4v4h-4zM5 13h4v4H5zM10.500 13h4v4h-4zM5 18h4v4H5zM10.500 18h4v4h-4z" />
        <path fill="#1e4e79" d="M16 13h4v9h-4z" />
      </TaskIcon>
    ),
  },
  {
    name: 'Explorador de archivos',
    running: true,
    icon: (
      <TaskIcon>
        <path fill="#e0a51e" d="M0 2a1 1 0 0 1 1-1h8l2 3h12v6H0z" />
        <path fill="#fbd54a" d="M0 6h9l2-2h13v18a1 1 0 0 1-1 1H1a1 1 0 0 1-1-1z" />
        <path fill="#1f6fb5" d="M5 23v-5a2 2 0 0 1 2-2h10a2 2 0 0 1 2 2v5z" />
        <path fill="#144b80" d="M8 19h8v2H8z" />
      </TaskIcon>
    ),
  },
  {
    name: 'Lupa',
    icon: (
      <TaskIcon>
        <rect x="3" y="1" width="21" height="17" rx="1" fill="#5a5a5a" />
        <path d="M11 18l4 4.500" stroke="#1e8fb0" strokeWidth="2.500" />
        <circle cx="7" cy="15" r="6.500" fill="#2bbccb" />
        <path d="M7 11.500v7M3.500 15h7" stroke="#fff" strokeWidth="1.500" />
      </TaskIcon>
    ),
  },
  {
    name: 'MyASUS',
    icon: (
      <TaskIcon>
        <rect width="24" height="24" rx="1" fill="#2f7de0" />
        <path fill="#fff" d="M3.500 17.500L8.500 7H10.300L5.300 17.500zM8 17.500L13 7h1.800L9.800 17.500zM12.500 17.500L18.500 7H20.500v10.500h-1.800V10.500l-4 7z" />
      </TaskIcon>
    ),
  },
  {
    name: 'Bloc de notas',
    icon: (
      <TaskIcon>
        <path fill="#6fd0e8" d="M3 2h19v20H3z" />
        <path fill="#fff" d="M3 20h19v3H3z" />
        <path fill="#c0392b" d="M3 22.500h19V24H3z" />
        <path stroke="#1f6f8b" strokeWidth="1.300" d="M6 7.500h13M6 11.500h13M6 15.500h13M5.500 0v4M9 0v4M12.500 0v4M16 0v4M19.500 0v4" />
      </TaskIcon>
    ),
  },
  {
    name: 'Paint',
    running: true,
    icon: (
      <TaskIcon>
        <path fill="#4fb3e8" d="M12 1c7 0 11 4 11 9 0 4-3 5-6 5-2 0-2 1.500-1.500 3.500.5 3-1.500 4.500-5 4C5 22 1 18 1 12 1 6 5.500 1 12 1z" />
        <circle cx="6.500" cy="8" r="2" fill="#e05a3c" />
        <circle cx="12" cy="5" r="2" fill="#f5c63a" />
        <circle cx="5.500" cy="14" r="2" fill="#6ac259" />
        <circle cx="9.500" cy="18.500" r="1.800" fill="#1c5d9c" />
        <path fill="#f0d9a8" d="M17 8l2.500-5L22 8l-1 14h-3z" />
        <path fill="#a8643a" d="M17.500 12h4l-.5 10h-3z" />
      </TaskIcon>
    ),
  },
  {
    name: 'Camtasia',
    icon: (
      <TaskIcon>
        <rect width="24" height="24" rx="2" fill="#6cc417" />
        <path d="M19 5.500H9A3.500 3.500 0 0 0 5.500 9v6A3.500 3.500 0 0 0 9 18.500h10" stroke="#fff" strokeWidth="3.500" />
      </TaskIcon>
    ),
  },
  {
    name: 'Edge',
    running: true,
    icon: (
      <TaskIcon>
        <circle cx="12" cy="12" r="11.500" fill="#1577c4" />
        <path fill="#38c7c0" d="M1 9C3 3 7.500.5 12 .5c7 0 11.500 5 11.500 10.500 0 4-3 6-6 6-2.500 0-3.500-1-3.500-2 0-1 1-1.500 1-3.500C15 8.500 12 6.500 8.500 6.500 5 6.500 2.500 7.500 1 9z" />
        <path fill="#62dd6d" d="M16 1.200c5 1.600 7.500 5.500 7.500 9.800 0 4-3 6-6 6-2.500 0-3.500-1-3.500-2 5 0 7-8 2-13.800z" />
        <path fill="#0d4a94" d="M9 11c-2 6 2 11 8 11 2 0 3-.8 5-2.500-3 4.500-8 4.500-11 3.500C5 21.500 4 14 9 11z" />
      </TaskIcon>
    ),
  },
  {
    name: 'Chrome',
    running: true,
    icon: (
      <span className="relative flex">
        <TaskIcon>
          <circle cx="11" cy="13" r="11" fill="#2fa84f" />
          <path fill="#e0402e" d="M1.500 7.500a11 11 0 0 1 19 0L11 8l-5 7z" />
          <path fill="#fbc116" d="M20.500 7.500A11 11 0 0 1 11 24l5-9-1-7z" />
          <circle cx="11" cy="13" r="5.500" fill="#fff" />
          <circle cx="11" cy="13" r="4.200" fill="#3f7fe8" />
        </TaskIcon>
        <svg className="absolute -top-1 -right-1.5 h-4 w-4" viewBox="0 0 16 16" aria-hidden="true">
          <circle cx="8" cy="8" r="8" fill="#f4f0f5" />
          <path fill="#d4606a" d="M5 3h2v2H5zM9 3h2v2H9zM6 5h4v3H6z" />
          <path fill="#2c4a7c" d="M4 9h2l1 1h2l1-1h2v4H4z" />
        </svg>
      </span>
    ),
  },
  {
    name: 'OBS',
    running: true,
    icon: (
      <span className="relative flex">
        <TaskIcon>
          <circle cx="11" cy="12" r="10.500" fill="#222" stroke="#e6e6e6" strokeWidth="1.400" />
          <path stroke="#e6e6e6" strokeWidth="1.600" d="M9 3c-2 3-1 7 3 8 3 .5 6-1 8.500 1.500M12 11c-2 3-6 3.500-9 1M12 11c2.500 2.500 2.500 6-.5 10" />
        </TaskIcon>
        <span className="absolute -top-1 -right-1 h-3 w-3 rounded-full bg-[#f00000]" />
      </span>
    ),
  },
  { name: 'Excel', running: true, active: true, icon: <ExcelLogo size="w-6 h-6" /> },
];

const Taskbar = () => (
  <div className="flex h-12 shrink-0 items-center bg-[#1c1c1c] text-white">
    <div className="w-[278px]">
      <button type="button" aria-label="Widgets" className="relative ml-[18px] flex">
        <svg className="h-7 w-7" viewBox="0 0 28 28" aria-hidden="true">
          <path fill="#c3cdee" d="M7 23a5 5 0 0 1-.5-9.500A7 7 0 0 1 19 10.500a6 6 0 0 1 2 12.500z" />
        </svg>
        <span className="absolute -top-0.5 -right-px flex h-4 w-4 items-center justify-center rounded-full bg-[#f2808c] text-[10px] text-[#4a1018]">2</span>
      </button>
    </div>
    {apps.map((app) => (
      <button
        key={app.name}
        type="button"
        aria-label={app.name}
        className="flex h-12 w-11 items-center justify-center"
      >
        <span className={clsx('relative flex h-10 w-10 items-center justify-center rounded', app.active && 'bg-[#2a2a2a]')}>
          {app.icon}
          {app.running && (
            <span className={clsx('absolute bottom-px h-[3px] rounded-full', app.active ? 'w-4 bg-[#60cdf5]' : 'w-1.5 bg-[#9a9a9a]')} />
          )}
        </span>
      </button>
    ))}
    <div className="ml-auto flex items-center pr-[19px]">
      <Icon><path stroke="#fff" strokeWidth="1.500" d="M2.500 10.500L8 5.500l5.500 5" /></Icon>
      <span className="ml-4"><Icon>
        <path fill="#777" stroke="none" d="M4 13a3.500 3.500 0 0 1 0-7 4.500 4.500 0 0 1 8.500 1.500A3 3 0 0 1 13 13z" />
        <path stroke="#eee" d="M1.500 1.500l13.500 13" />
      </Icon></span>
      <span className="ml-4"><Icon>
        <rect x="5.500" y="1" width="5" height="9" rx="2.500" fill="#2f7f86" stroke="#9fe0e0" />
        <path stroke="#9fe0e0" d="M3 7.500a5 5 0 0 0 10 0M8 12.500V15.500" />
      </Icon></span>
      <span className="ml-4"><Icon>
        <g stroke="#fff" strokeWidth="1.200">
          <path d="M1 6.500a10 10 0 0 1 14 0M3.200 9a7 7 0 0 1 9.600 0M5.500 11.300a3.700 3.700 0 0 1 5 0" />
          <circle cx="8" cy="13" r="1" fill="#fff" />
        </g>
      </Icon></span>
      <span className="ml-2"><Icon><path stroke="#fff" d="M1 6h2.500L7 3v10L3.500 10H1zM9 6q1.500 2 0 4M11 4.500q2.500 3.500 0 7M13 3q3.500 5 0 10" /></Icon></span>
      <span className="ml-2"><Icon>
        <path stroke="#fff" strokeWidth="1.200" d="M6 4h7v9H2.500V8M13 6.500h2v4h-2M4.500.5L2 5h2.500L3 8" />
      </Icon></span>
      <time className="ml-4 w-[56px] text-right text-[12px] leading-4 whitespace-nowrap">10:20<br />4/11/2025</time>
      <span className="ml-2"><Icon>
        <path stroke="#fff" strokeWidth="1.200" d="M8 2C5 2 3 4.500 3 7v4l-1.500 2h13L13 11M6 15h4M7 6h3l-3 4h3M11.500 1H15l-3.500 4H15" />
      </Icon></span>
    </div>
  </div>
);

const App = () => (
  <div className="flex h-screen flex-col overflow-hidden bg-[#efefef] font-['Open_Sans','Noto_Sans',sans-serif]">
    <TitleBar />
    <MenuBar />
    <Ribbon />
    <FormulaBar />
    <Sheet />
    <SheetTabs />
    <StatusBar />
    <Taskbar />
  </div>
);

export default App;
